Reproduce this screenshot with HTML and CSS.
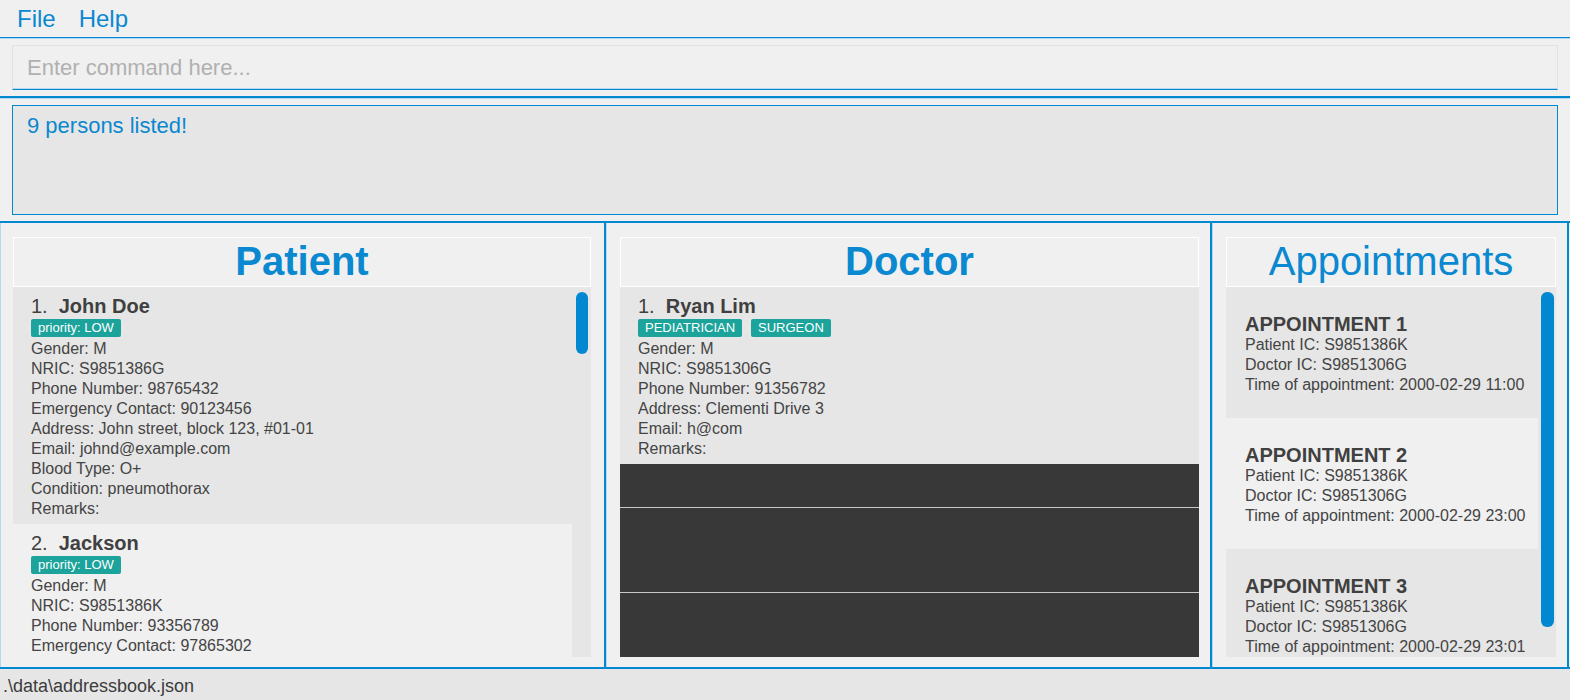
FILE: index.html
```html
<!DOCTYPE html>
<html lang="en">
<head>
<meta charset="utf-8">
<title>Address Book</title>
<link rel="stylesheet" href="styles.css">
</head>
<body>
<div class="app">
  <nav class="menubar">
    <span class="menu-item">File</span>
    <span class="menu-item">Help</span>
  </nav>
  <div class="command-pane">
    <div class="command-box">Enter command here...</div>
  </div>
  <div class="result-pane">
    <div class="result-box">9 persons listed!</div>
  </div>
  <main class="panels">
    <section class="panel panel-patient">
      <div class="panel-title bold">Patient</div>
      <div class="list">
        <div class="card card-even">
          <div class="card-head"><span class="idx">1.</span><span class="name">John Doe</span></div>
          <div class="tags"><span class="tag">priority: LOW</span></div>
          <div class="row">Gender: M</div>
          <div class="row">NRIC: S9851386G</div>
          <div class="row">Phone Number: 98765432</div>
          <div class="row">Emergency Contact: 90123456</div>
          <div class="row">Address: John street, block 123, #01-01</div>
          <div class="row">Email: johnd@example.com</div>
          <div class="row">Blood Type: O+</div>
          <div class="row">Condition: pneumothorax</div>
          <div class="row">Remarks:</div>
        </div>
        <div class="card card-odd card-last">
          <div class="card-head"><span class="idx">2.</span><span class="name">Jackson</span></div>
          <div class="tags"><span class="tag">priority: LOW</span></div>
          <div class="row">Gender: M</div>
          <div class="row">NRIC: S9851386K</div>
          <div class="row">Phone Number: 93356789</div>
          <div class="row">Emergency Contact: 97865302</div>
        </div>
        <div class="thumb thumb-patient"></div>
      </div>
    </section>
    <section class="panel panel-doctor">
      <div class="panel-title bold">Doctor</div>
      <div class="list list-doctor">
        <div class="card card-even card-full">
          <div class="card-head"><span class="idx">1.</span><span class="name">Ryan Lim</span></div>
          <div class="tags"><span class="tag">PEDIATRICIAN</span><span class="tag">SURGEON</span></div>
          <div class="row">Gender: M</div>
          <div class="row">NRIC: S9851306G</div>
          <div class="row">Phone Number: 91356782</div>
          <div class="row">Address: Clementi Drive 3</div>
          <div class="row">Email: h@com</div>
          <div class="row">Remarks:</div>
        </div>
        <div class="empty-cell cell-a"></div>
        <div class="empty-cell cell-b"></div>
        <div class="empty-cell cell-c"></div>
      </div>
    </section>
    <section class="panel panel-appt">
      <div class="panel-title">Appointments</div>
      <div class="list">
        <div class="appt card-even">
          <div class="appt-title">APPOINTMENT 1</div>
          <div class="row">Patient IC: S9851386K</div>
          <div class="row">Doctor IC: S9851306G</div>
          <div class="row">Time of appointment: 2000-02-29 11:00</div>
        </div>
        <div class="appt card-odd">
          <div class="appt-title">APPOINTMENT 2</div>
          <div class="row">Patient IC: S9851386K</div>
          <div class="row">Doctor IC: S9851306G</div>
          <div class="row">Time of appointment: 2000-02-29 23:00</div>
        </div>
        <div class="appt card-even appt-last">
          <div class="appt-title">APPOINTMENT 3</div>
          <div class="row">Patient IC: S9851386K</div>
          <div class="row">Doctor IC: S9851306G</div>
          <div class="row">Time of appointment: 2000-02-29 23:01</div>
        </div>
        <div class="thumb thumb-appt"></div>
      </div>
    </section>
  </main>
  <footer class="statusbar">.\data\addressbook.json</footer>
</div>
</body>
</html>
```
FILE: styles.css
```css
* { box-sizing: border-box; }
html, body { margin: 0; padding: 0; }
body {
  background: #f0f0f0;
  font-family: "Liberation Sans", Arial, sans-serif;
  color: #404040;
  width: 1570px;
  height: 700px;
  overflow: hidden;
}
.app { display: flex; flex-direction: column; height: 700px; }

.menubar {
  height: 38px;
  flex: none;
  display: flex;
  gap: 23px;
  padding: 5px 0 0 17px;
  border-bottom: 1px solid #0288d1;
  box-shadow: 0 1px 0 #b3d8f0;
  margin-bottom: 1px;
}
.menu-item {
  font-size: 24px;
  line-height: 28px;
  color: #0a88d0;
}

.command-pane {
  flex: none;
  padding: 6px 12px 6px 12px;
  border-bottom: 2px solid #0288d1;
}
.command-box {
  height: 45px;
  border: 1px solid #e2e2e2;
  border-bottom: 1px solid #0288d1;
  box-shadow: inset 0 -1px 0 #b3d8f0;
  padding: 9px 0 0 14px;
  font-size: 22px;
  line-height: 26px;
  color: #b0b0b0;
}

.result-pane {
  flex: none;
  padding: 6px 12px 6px 12px;
  border-top: 1px solid #b3d8f0;
}
.result-box {
  height: 110px;
  border: 1px solid #0288d1;
  background: #e6e6e6;
  padding: 7px 0 0 14px;
  font-size: 22px;
  line-height: 26px;
  color: #0a88d0;
}

.panels {
  flex: none;
  display: flex;
  height: 448px;
  border-top: 2px solid #0288d1;
  border-bottom: 2px solid #0288d1;
}
.panel {
  display: flex;
  flex-direction: column;
  padding-top: 14px;
  padding-bottom: 10px;
  border-left: 1px solid #b3d8f0;
  border-right: 2px solid #0288d1;
}
.panel-patient { width: 606px; padding-left: 12px; padding-right: 13px; }
.panel-doctor { width: 606px; padding-left: 13px; padding-right: 11px; }
.panel-appt { flex: 1; padding-left: 13px; padding-right: 11px; margin-right: 1px; }

.panel-title {
  height: 50px;
  flex: none;
  border: 1px solid #ffffff;
  text-align: center;
  font-size: 40px;
  line-height: 46px;
  color: #0a88d0;
}
.panel-title.bold { font-weight: bold; }

.list {
  position: relative;
  flex: 1;
  overflow: hidden;
  background: #e6e6e6;
}
.list-doctor { background: #383838; }

.card {
  width: calc(100% - 19px);
  padding: 8px 0 5px 18px;
}
.card-last { padding-bottom: 2px; }
.card-full { width: 100%; padding-bottom: 5px; }
.card-even { background: #e6e6e6; }
.card-odd { background: #f0f0f0; }

.card-head {
  font-size: 20px;
  line-height: 22px;
  color: #404040;
  white-space: nowrap;
}
.idx { margin-right: 11px; }
.name { font-weight: bold; }

.tags {
  display: flex;
  gap: 9px;
  margin: 2px 0 2px;
}
.tag {
  height: 18px;
  padding: 0 7px;
  background: #1ba39c;
  color: #ffffff;
  font-size: 13px;
  line-height: 18px;
  border-radius: 2px;
}

.row {
  font-size: 16px;
  line-height: 20px;
  color: #444444;
  white-space: nowrap;
}

.empty-cell { background: #383838; }
.cell-a { height: 43px; }
.cell-b { height: 85px; border-top: 1px solid #c8c8c8; }
.cell-c { height: 64px; border-top: 1px solid #c8c8c8; }

.appt {
  width: calc(100% - 18px);
  height: 131px;
  padding: 26px 0 0 19px;
}
.appt-last { height: 108px; }
.appt-title {
  font-size: 20px;
  line-height: 22px;
  font-weight: bold;
  color: #404040;
}

.thumb {
  position: absolute;
  top: 5px;
  background: #0288d1;
  border-radius: 6px;
}
.thumb-patient { right: 3px; width: 12px; height: 62px; }
.thumb-appt { right: 2px; width: 13px; height: 335px; }

.statusbar {
  flex: 1;
  background: #e6e6e6;
  padding: 6px 0 0 3px;
  font-size: 18px;
  line-height: 22px;
  color: #3c3c3c;
}
```
